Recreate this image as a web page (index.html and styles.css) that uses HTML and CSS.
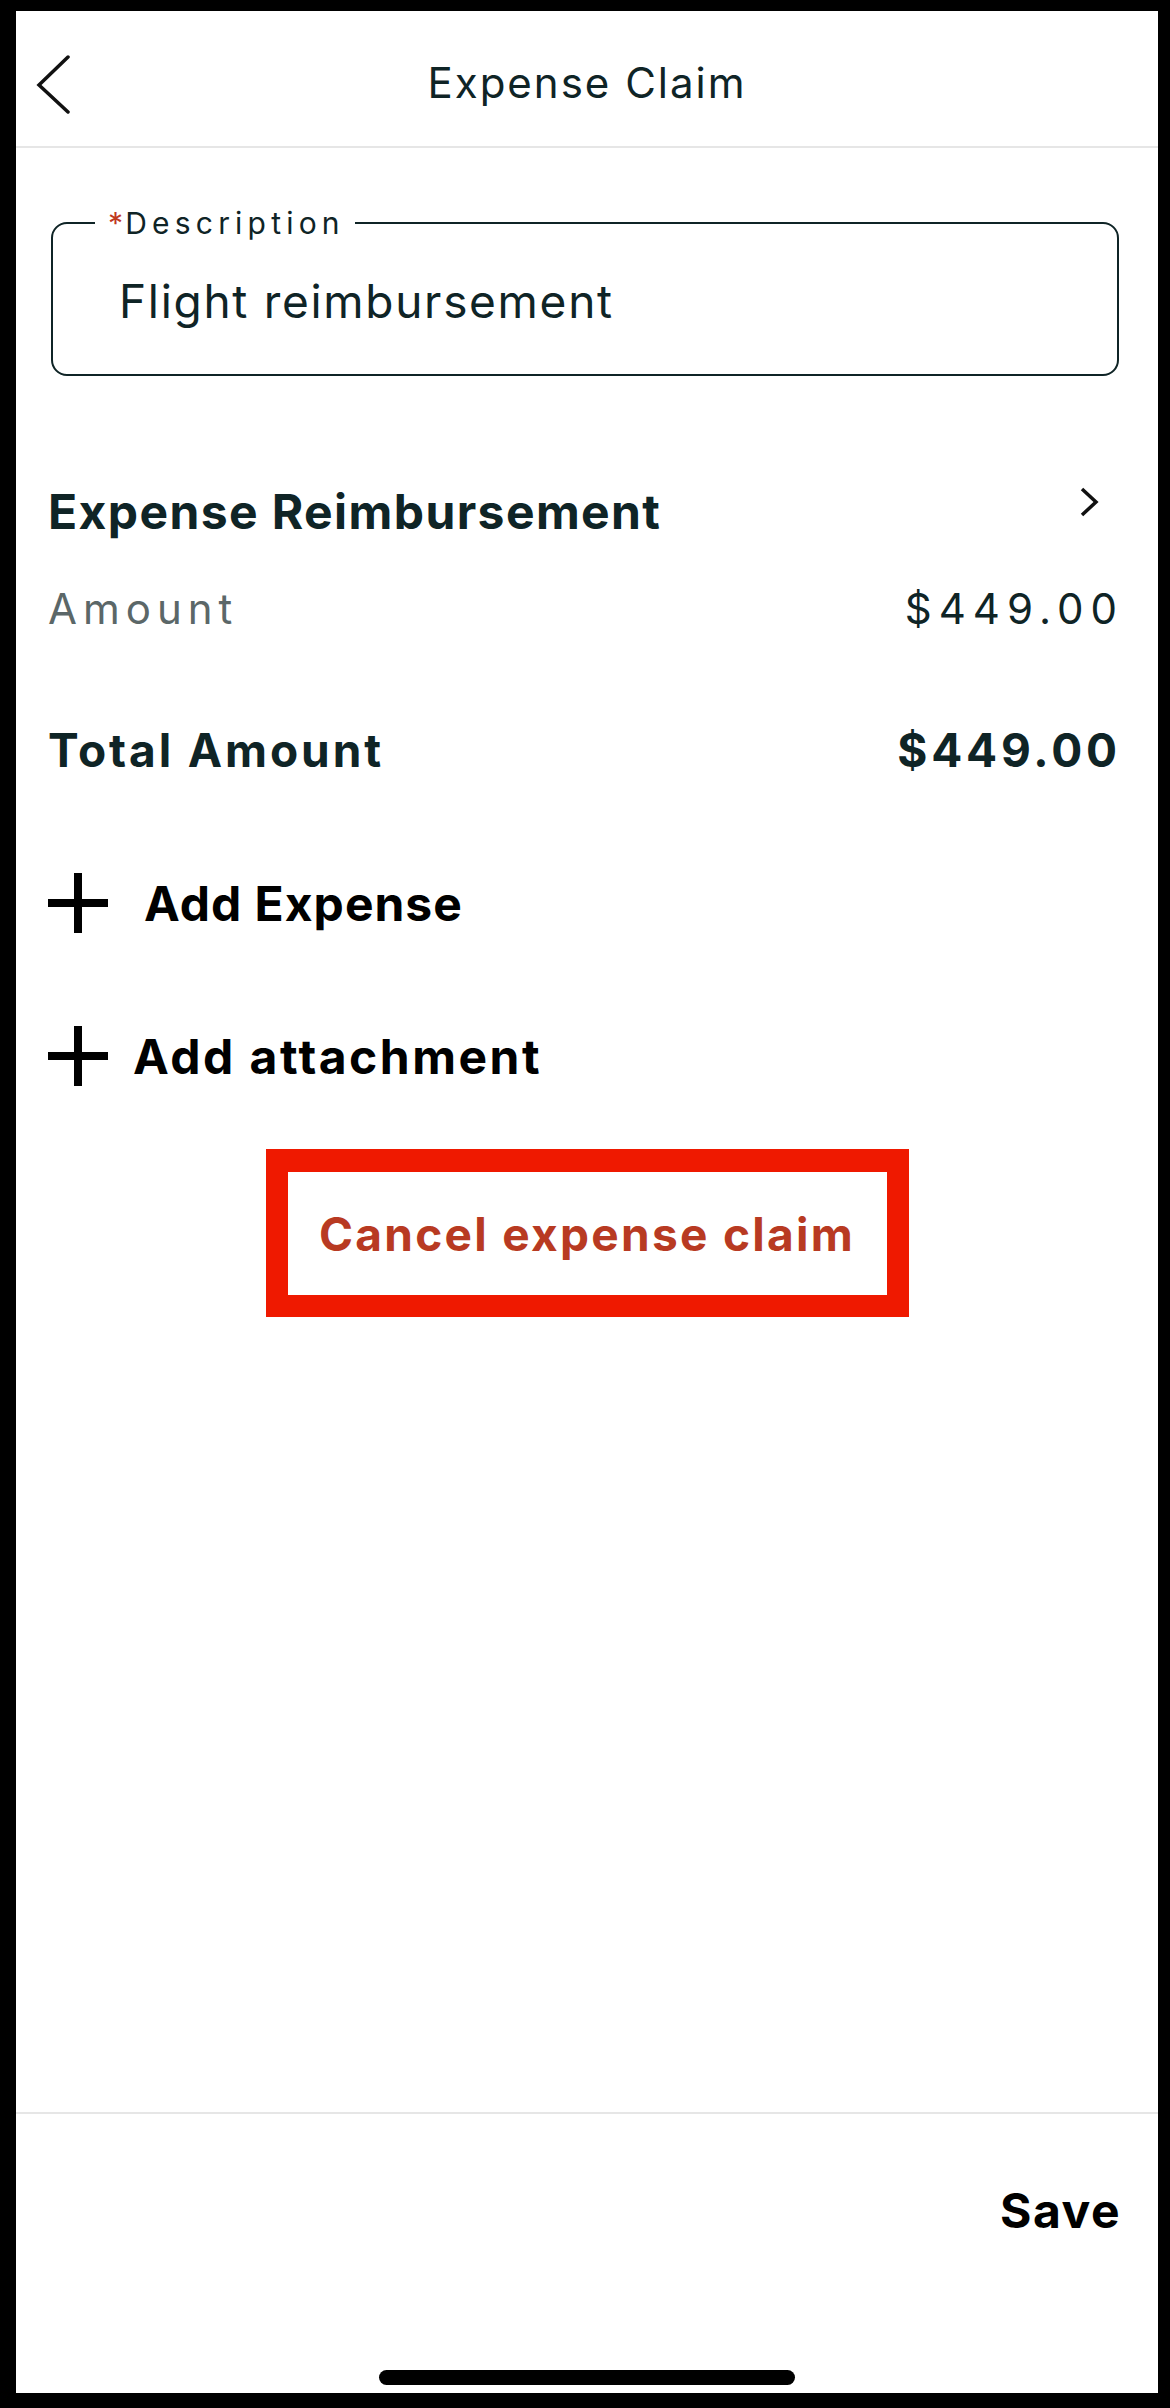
FILE: index.html
```html
<!DOCTYPE html>
<html lang="en">
<head>
<meta charset="utf-8">
<title>Expense Claim</title>
<link rel="stylesheet" href="styles.css">
</head>
<body>
<div class="frame">
  <header class="topbar">
    <div class="topbar-left">
      <svg class="back" width="36" height="60" viewBox="0 0 36 60" aria-hidden="true">
        <polyline points="33,2 4,30 33,57" fill="none" stroke="#111" stroke-width="3.5" stroke-linecap="round" stroke-linejoin="miter"/>
      </svg>
    </div>
    <h1 class="title">Expense Claim</h1>
    <div></div>
  </header>

  <main class="content">
    <fieldset class="field">
      <legend class="field-label"><span class="req">*</span>Description</legend>
      <div class="field-value">Flight reimbursement</div>
    </fieldset>

    <div class="row row-head">
      <span class="strong">Expense Reimbursement</span>
      <svg class="chev" width="20" height="32" viewBox="0 0 20 32" aria-hidden="true">
        <polyline points="3,3 17,16 3,29" fill="none" stroke="#111" stroke-width="3.5"/>
      </svg>
    </div>
    <div class="row row-amount">
      <span class="muted">Amount</span>
      <span class="value">$449.00</span>
    </div>
    <div class="row row-total">
      <span>Total Amount</span>
      <span class="value">$449.00</span>
    </div>

    <div class="action action-expense">
      <svg class="plus" width="60" height="60" viewBox="0 0 60 60" aria-hidden="true">
        <rect x="26" y="0" width="8" height="60" fill="#000"/>
        <rect x="0" y="26" width="60" height="8" fill="#000"/>
      </svg>
      <span>Add Expense</span>
    </div>
    <div class="action action-attach">
      <svg class="plus" width="60" height="60" viewBox="0 0 60 60" aria-hidden="true">
        <rect x="26" y="0" width="8" height="60" fill="#000"/>
        <rect x="0" y="26" width="60" height="8" fill="#000"/>
      </svg>
      <span>Add attachment</span>
    </div>

    <div class="cancel-wrap">
      <div class="cancel-box">Cancel expense claim</div>
    </div>
  </main>

  <footer class="footer">
    <div class="save">Save</div>
    <div class="home-indicator"></div>
  </footer>
</div>
</body>
</html>
```

FILE: styles.css
```css
* { box-sizing: border-box; }

html, body {
  margin: 0;
  padding: 0;
  background: #fff;
}

body {
  font-family: Inter, "Noto Sans", "Liberation Sans", sans-serif;
  color: #0f2426;
}

.frame {
  width: 1170px;
  height: 2408px;
  border-style: solid;
  border-color: #000;
  border-width: 11px 12px 15px 16px;
  display: flex;
  flex-direction: column;
  background: #fff;
}

/* Header */
.topbar {
  height: 137px;
  border-bottom: 2px solid #e6e6e6;
  display: grid;
  grid-template-columns: 1fr auto 1fr;
  align-items: start;
}

.topbar-left {
  padding: 44px 0 0 19px;
}

.back { display: block; }

.title {
  margin: 0;
  padding-top: 47px;
  font-size: 42px;
  line-height: 50px;
  font-weight: 400;
  letter-spacing: 2px;
  color: #0f2426;
}

/* Content */
.content {
  flex: 1;
  display: flex;
  flex-direction: column;
  padding: 0 41px 0 32px;
}

.field {
  margin: 57px -2px 0 3px;
  padding: 0;
  border: 2px solid #0f2426;
  border-radius: 16px;
  min-width: 0;
}

.field-label {
  margin-left: 42px;
  padding: 0 10px 0 13px;
  font-size: 30px;
  line-height: 36px;
  letter-spacing: 5.2px;
  color: #0f2426;
}

.req {
  color: #c0391f;
  margin-right: -3px;
}

.field-value {
  height: 133px;
  padding: 0 0 14px 66px;
  display: flex;
  align-items: center;
  font-size: 46px;
  letter-spacing: 1.7px;
  color: #0f2426;
}

.row {
  display: flex;
  justify-content: space-between;
  align-items: center;
}

.row-head {
  margin-top: 106px;
  height: 58px;
  font-size: 48px;
  font-weight: 700;
  letter-spacing: 1.4px;
}

.chev {
  display: block;
  margin-right: 18px;
  margin-top: -18px;
}

.row-amount {
  margin-top: 43px;
  height: 50px;
  font-size: 42px;
  letter-spacing: 6px;
}

.row-amount .value {
  letter-spacing: 7px;
  margin-right: -7px;
}

.muted { color: #5b6768; }

.row-total {
  margin-top: 89px;
  height: 56px;
  font-size: 46px;
  font-weight: 700;
  letter-spacing: 2.9px;
}

.row-total .value {
  letter-spacing: 3.8px;
  margin-right: -3.8px;
}

.action {
  display: flex;
  align-items: center;
  height: 60px;
  font-size: 48px;
  font-weight: 700;
  color: #000;
}

.action .plus { display: block; flex: none; }

.action-expense {
  margin-top: 95px;
  gap: 36px;
  letter-spacing: 1px;
}

.action-attach {
  margin-top: 93px;
  gap: 25px;
  letter-spacing: 2.5px;
}

.cancel-wrap {
  margin-top: 63px;
  display: flex;
  justify-content: center;
  padding-left: 9px;
}

.cancel-box {
  width: 643px;
  height: 168px;
  border: 22px solid #ef1900;
  border-top-width: 23px;
  display: flex;
  align-items: center;
  justify-content: center;
  font-size: 46px;
  font-weight: 700;
  letter-spacing: 2.3px;
  color: #b83a22;
}

/* Footer */
.footer {
  height: 281px;
  border-top: 2px solid #e6e6e6;
  display: flex;
  flex-direction: column;
  align-items: flex-end;
}

.save {
  margin-top: 68px;
  margin-right: 37px;
  font-size: 48px;
  line-height: 58px;
  font-weight: 700;
  letter-spacing: 1.5px;
  color: #000;
}

.home-indicator {
  align-self: center;
  margin-top: 130px;
  width: 416px;
  height: 15px;
  border-radius: 8px;
  background: #000;
}
```
